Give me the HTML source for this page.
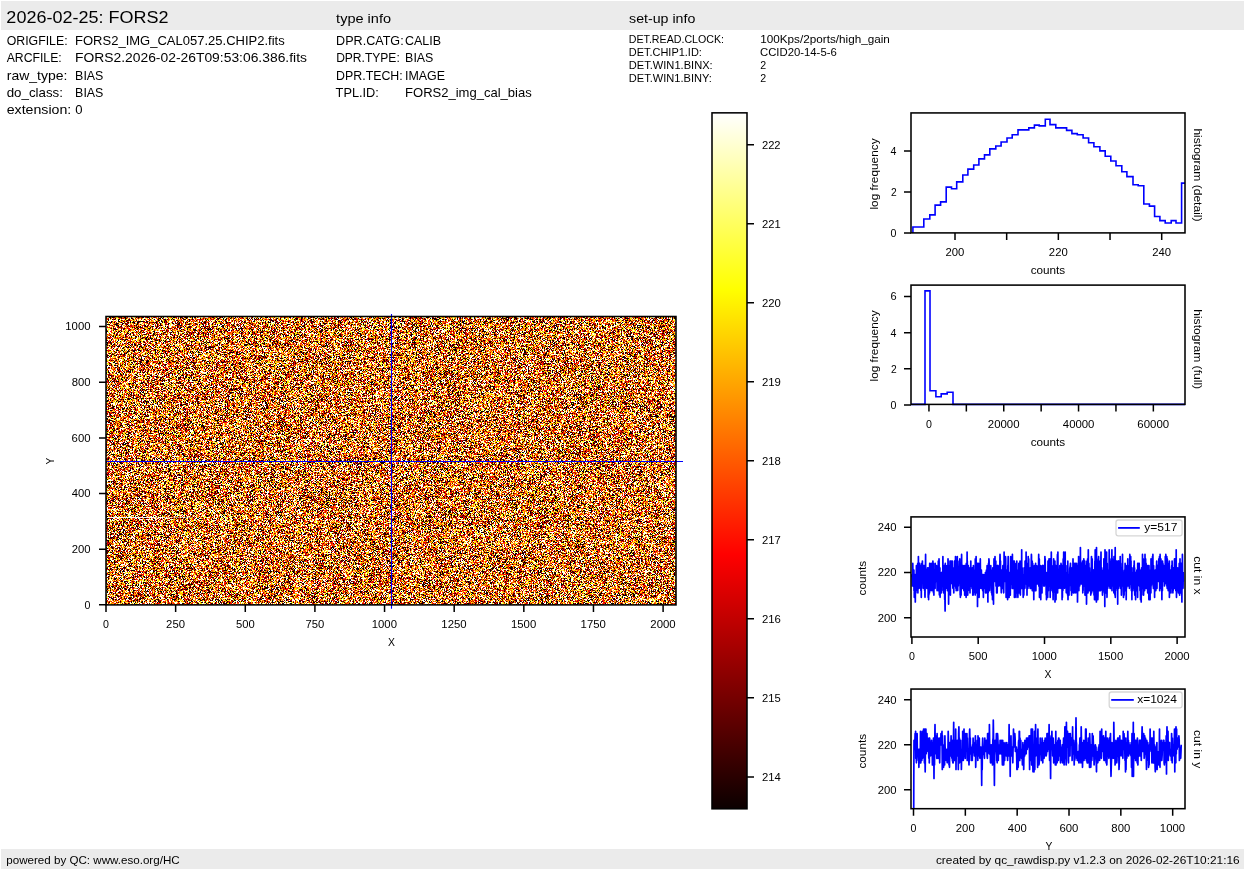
<!DOCTYPE html>
<html><head><meta charset="utf-8"><title>FORS2 raw display</title>
<style>
html,body{margin:0;padding:0;background:#fff;width:1245px;height:870px;overflow:hidden}
#noise{position:absolute;left:106px;top:316.5px;width:570px;height:288.4px;background:rgb(189,117,59)}
svg{position:absolute;left:0;top:0}
text{font-family:"Liberation Sans",sans-serif;fill:#000}
</style></head><body>
<canvas id="noise" width="570" height="288"></canvas>
<svg width="1245" height="870" viewBox="0 0 1245 870"><rect x="1" y="1" width="1243" height="29" fill="#ebebeb"/><rect x="1" y="849" width="1243" height="20" fill="#ebebeb"/><text x="6.39" y="23.00" font-size="16.64" textLength="162.21" lengthAdjust="spacingAndGlyphs" fill="#000" >2026-02-25: FORS2</text><text x="336.11" y="22.70" font-size="13.19" textLength="54.93" lengthAdjust="spacingAndGlyphs" fill="#000" >type info</text><text x="629.08" y="23.00" font-size="13.19" textLength="66.26" lengthAdjust="spacingAndGlyphs" fill="#000" >set-up info</text><text x="6.71" y="45.00" font-size="13.14" textLength="60.92" lengthAdjust="spacingAndGlyphs" fill="#000" >ORIGFILE:</text><text x="75.05" y="45.40" font-size="13.19" textLength="209.64" lengthAdjust="spacingAndGlyphs" fill="#000" >FORS2_IMG_CAL057.25.CHIP2.fits</text><text x="6.67" y="62.00" font-size="13.14" textLength="55.06" lengthAdjust="spacingAndGlyphs" fill="#000" >ARCFILE:</text><text x="74.98" y="62.00" font-size="13.19" textLength="231.96" lengthAdjust="spacingAndGlyphs" fill="#000" >FORS2.2026-02-26T09:53:06.386.fits</text><text x="6.80" y="79.60" font-size="13.14" textLength="60.55" lengthAdjust="spacingAndGlyphs" fill="#000" >raw_type:</text><text x="75.10" y="79.60" font-size="13.19" textLength="28.31" lengthAdjust="spacingAndGlyphs" fill="#000" >BIAS</text><text x="6.72" y="97.40" font-size="13.14" textLength="56.26" lengthAdjust="spacingAndGlyphs" fill="#000" >do_class:</text><text x="75.10" y="97.40" font-size="13.19" textLength="28.31" lengthAdjust="spacingAndGlyphs" fill="#000" >BIAS</text><text x="6.68" y="114.00" font-size="13.14" textLength="64.61" lengthAdjust="spacingAndGlyphs" fill="#000" >extension:</text><text x="75.21" y="114.00" font-size="13.19" textLength="7.30" lengthAdjust="spacingAndGlyphs" fill="#000" >0</text><text x="336.10" y="44.90" font-size="13.14" textLength="67.57" lengthAdjust="spacingAndGlyphs" fill="#000" >DPR.CATG:</text><text x="404.97" y="44.90" font-size="13.19" textLength="36.07" lengthAdjust="spacingAndGlyphs" fill="#000" >CALIB</text><text x="336.13" y="62.25" font-size="13.14" textLength="63.65" lengthAdjust="spacingAndGlyphs" fill="#000" >DPR.TYPE:</text><text x="405.10" y="62.25" font-size="13.19" textLength="28.31" lengthAdjust="spacingAndGlyphs" fill="#000" >BIAS</text><text x="336.10" y="79.60" font-size="13.14" textLength="66.63" lengthAdjust="spacingAndGlyphs" fill="#000" >DPR.TECH:</text><text x="404.97" y="79.60" font-size="13.19" textLength="40.11" lengthAdjust="spacingAndGlyphs" fill="#000" >IMAGE</text><text x="335.58" y="96.60" font-size="13.14" textLength="43.33" lengthAdjust="spacingAndGlyphs" fill="#000" >TPL.ID:</text><text x="405.05" y="96.60" font-size="13.19" textLength="126.72" lengthAdjust="spacingAndGlyphs" fill="#000" >FORS2_img_cal_bias</text><text x="628.76" y="43.00" font-size="11.07" textLength="95.33" lengthAdjust="spacingAndGlyphs" fill="#000" >DET.READ.CLOCK:</text><text x="760.26" y="43.00" font-size="11.07" textLength="129.62" lengthAdjust="spacingAndGlyphs" fill="#000" >100Kps/2ports/high_gain</text><text x="628.74" y="55.80" font-size="11.07" textLength="73.14" lengthAdjust="spacingAndGlyphs" fill="#000" >DET.CHIP1.ID:</text><text x="760.01" y="55.80" font-size="11.07" textLength="76.75" lengthAdjust="spacingAndGlyphs" fill="#000" >CCID20-14-5-6</text><text x="628.73" y="68.70" font-size="11.07" textLength="83.96" lengthAdjust="spacingAndGlyphs" fill="#000" >DET.WIN1.BINX:</text><text x="760.23" y="68.70" font-size="11.07" textLength="5.91" lengthAdjust="spacingAndGlyphs" fill="#000" >2</text><text x="628.74" y="82.00" font-size="11.07" textLength="83.16" lengthAdjust="spacingAndGlyphs" fill="#000" >DET.WIN1.BINY:</text><text x="760.23" y="82.00" font-size="11.07" textLength="5.91" lengthAdjust="spacingAndGlyphs" fill="#000" >2</text><text x="6.26" y="863.60" font-size="11.07" textLength="173.41" lengthAdjust="spacingAndGlyphs" fill="#000" >powered by QC: www.eso.org/HC</text><text x="935.93" y="863.80" font-size="11.07" textLength="303.69" lengthAdjust="spacingAndGlyphs" fill="#000" >created by qc_rawdisp.py v1.2.3 on 2026-02-26T10:21:16</text><path d="M107 517.5H155" stroke="#fff" stroke-width="1" stroke-opacity="0.95"/><path d="M155 517.5H192" stroke="#fff" stroke-width="1" stroke-opacity="0.45"/><path d="M391.5 314.1V608.8" stroke="#0000ff" stroke-width="1.1"/><path d="M106 461.45H683" stroke="#0000ff" stroke-width="1.1"/><rect x="106.0" y="316.5" width="570.0" height="288.4" fill="none" stroke="#000" stroke-width="1.55"/><path d="M106.00 604.90v7.0M175.64 604.90v7.0M245.28 604.90v7.0M314.91 604.90v7.0M384.55 604.90v7.0M454.19 604.90v7.0M523.83 604.90v7.0M593.46 604.90v7.0M663.10 604.90v7.0" stroke="#000" stroke-width="1.5"/><text x="103.04" y="627.90" font-size="10.70" textLength="5.92" lengthAdjust="spacingAndGlyphs" fill="#000" >0</text><text x="166.13" y="627.90" font-size="10.70" textLength="18.88" lengthAdjust="spacingAndGlyphs" fill="#000" >250</text><text x="235.91" y="627.90" font-size="10.70" textLength="18.72" lengthAdjust="spacingAndGlyphs" fill="#000" >500</text><text x="305.45" y="627.90" font-size="10.70" textLength="18.80" lengthAdjust="spacingAndGlyphs" fill="#000" >750</text><text x="371.72" y="627.90" font-size="10.70" textLength="25.23" lengthAdjust="spacingAndGlyphs" fill="#000" >1000</text><text x="441.36" y="627.90" font-size="10.70" textLength="25.23" lengthAdjust="spacingAndGlyphs" fill="#000" >1250</text><text x="511.00" y="627.90" font-size="10.70" textLength="25.23" lengthAdjust="spacingAndGlyphs" fill="#000" >1500</text><text x="580.64" y="627.90" font-size="10.70" textLength="25.23" lengthAdjust="spacingAndGlyphs" fill="#000" >1750</text><text x="650.38" y="627.90" font-size="10.70" textLength="25.31" lengthAdjust="spacingAndGlyphs" fill="#000" >2000</text><path d="M106.00 604.80h-7.0M106.00 549.16h-7.0M106.00 493.52h-7.0M106.00 437.88h-7.0M106.00 382.24h-7.0M106.00 326.60h-7.0" stroke="#000" stroke-width="1.5"/><text x="84.59" y="608.65" font-size="10.70" textLength="5.92" lengthAdjust="spacingAndGlyphs" fill="#000" >0</text><text x="71.66" y="553.01" font-size="10.70" textLength="18.88" lengthAdjust="spacingAndGlyphs" fill="#000" >200</text><text x="71.73" y="497.37" font-size="10.70" textLength="18.81" lengthAdjust="spacingAndGlyphs" fill="#000" >400</text><text x="71.62" y="441.73" font-size="10.70" textLength="18.92" lengthAdjust="spacingAndGlyphs" fill="#000" >600</text><text x="71.69" y="386.09" font-size="10.70" textLength="18.85" lengthAdjust="spacingAndGlyphs" fill="#000" >800</text><text x="65.31" y="330.45" font-size="10.70" textLength="25.23" lengthAdjust="spacingAndGlyphs" fill="#000" >1000</text><text x="388.02" y="645.90" font-size="11.02" textLength="6.94" lengthAdjust="spacingAndGlyphs" fill="#000" >X</text><g transform="translate(50.00,461.00) rotate(-90)"><text x="-3.42" y="3.70" font-size="11.02" textLength="6.84" lengthAdjust="spacingAndGlyphs">Y</text></g><defs><linearGradient id="hot" x1="0" y1="1" x2="0" y2="0"><stop offset="0" stop-color="rgb(11,0,0)"/><stop offset="0.365079" stop-color="rgb(255,0,0)"/><stop offset="0.746032" stop-color="rgb(255,255,0)"/><stop offset="1" stop-color="rgb(255,255,255)"/></linearGradient></defs><rect x="712.0" y="112.85" width="35.0" height="695.9499999999999" fill="url(#hot)"/><rect x="712.0" y="112.85" width="35.0" height="695.9499999999999" fill="none" stroke="#000" stroke-width="1.55"/><path d="M747.00 776.90h7.0M747.00 697.87h7.0M747.00 618.84h7.0M747.00 539.81h7.0M747.00 460.78h7.0M747.00 381.75h7.0M747.00 302.72h7.0M747.00 223.69h7.0M747.00 144.66h7.0" stroke="#000" stroke-width="1.5"/><text x="761.93" y="780.75" font-size="10.70" textLength="18.87" lengthAdjust="spacingAndGlyphs" fill="#000" >214</text><text x="761.94" y="701.72" font-size="10.70" textLength="18.69" lengthAdjust="spacingAndGlyphs" fill="#000" >215</text><text x="761.93" y="622.69" font-size="10.70" textLength="18.97" lengthAdjust="spacingAndGlyphs" fill="#000" >216</text><text x="761.93" y="543.66" font-size="10.70" textLength="18.81" lengthAdjust="spacingAndGlyphs" fill="#000" >217</text><text x="761.93" y="464.63" font-size="10.70" textLength="18.91" lengthAdjust="spacingAndGlyphs" fill="#000" >218</text><text x="761.93" y="385.60" font-size="10.70" textLength="18.94" lengthAdjust="spacingAndGlyphs" fill="#000" >219</text><text x="761.93" y="306.57" font-size="10.70" textLength="18.88" lengthAdjust="spacingAndGlyphs" fill="#000" >220</text><text x="761.94" y="227.54" font-size="10.70" textLength="18.72" lengthAdjust="spacingAndGlyphs" fill="#000" >221</text><text x="761.94" y="148.51" font-size="10.70" textLength="18.65" lengthAdjust="spacingAndGlyphs" fill="#000" >222</text><clipPath id="c1"><rect x="911.0" y="112.93" width="274.0" height="119.97"/></clipPath><path d="M912.9 232.9V227.0H923.8V219.0H929.8V214.9H935.1V205.1H940.6V201.9H946.2V187.1H951.5V188.7H956.7V181.9H962.8V175.0H967.9V169.1H973.7V165.0H978.9V158.9H984.5V154.9H989.8V148.9H995.8V146.0H1001.1V142.0H1007.0V138.0H1012.2V134.8H1018.0V129.9H1028.8V127.9H1034.4V125.1H1039.2V125.9H1045.3V119.2H1050.0V124.6H1055.8V127.9H1066.6V130.4H1071.9V133.6H1077.3V134.8H1083.1V138.0H1088.6V142.8H1093.9V146.8H1099.9V150.9H1105.2V156.2H1110.8V161.0H1116.0V165.8H1121.8V171.8H1126.9V176.6H1133.0V184.7H1138.2V185.8H1143.8V204.0H1149.4V206.1H1154.6V216.5H1159.9V220.6H1165.2V223.0H1171.2V220.6H1176.0V223.0H1181.6V183.1H1186" fill="none" stroke="#0000ff" stroke-width="1.6" clip-path="url(#c1)"/><rect x="911.0" y="112.93" width="274.0" height="119.97" fill="none" stroke="#000" stroke-width="1.55"/><path d="M955.00 232.90v7.0M1006.67 232.90v7.0M1058.35 232.90v7.0M1110.03 232.90v7.0M1161.70 232.90v7.0" stroke="#000" stroke-width="1.5"/><text x="945.50" y="256.10" font-size="10.70" textLength="18.88" lengthAdjust="spacingAndGlyphs" fill="#000" >200</text><text x="1048.85" y="256.10" font-size="10.70" textLength="18.88" lengthAdjust="spacingAndGlyphs" fill="#000" >220</text><text x="1152.20" y="256.10" font-size="10.70" textLength="18.88" lengthAdjust="spacingAndGlyphs" fill="#000" >240</text><path d="M911.00 232.90h-7.0M911.00 192.00h-7.0M911.00 151.10h-7.0" stroke="#000" stroke-width="1.5"/><text x="890.59" y="236.75" font-size="10.70" textLength="5.92" lengthAdjust="spacingAndGlyphs" fill="#000" >0</text><text x="890.91" y="195.85" font-size="10.70" textLength="5.71" lengthAdjust="spacingAndGlyphs" fill="#000" >2</text><text x="890.49" y="154.95" font-size="10.70" textLength="5.92" lengthAdjust="spacingAndGlyphs" fill="#000" >4</text><text x="1030.66" y="273.80" font-size="11.02" textLength="34.60" lengthAdjust="spacingAndGlyphs" fill="#000" >counts</text><g transform="translate(878.00,173.60) rotate(-90)"><text x="-35.93" y="0.00" font-size="11.02" textLength="71.08" lengthAdjust="spacingAndGlyphs">log frequency</text></g><g transform="translate(1194.30,175.00) rotate(90)"><text x="-46.60" y="0.00" font-size="11.02" textLength="93.12" lengthAdjust="spacingAndGlyphs">histogram (detail)</text></g><path d="M911 404.4H925V290.9H930V390.7H935.9V396.7H941.2V393.9H947.2V392.3H953V404.4H1185" fill="none" stroke="#0000ff" stroke-width="1.6"/><rect x="911.0" y="285.1" width="274.0" height="119.29999999999995" fill="none" stroke="#000" stroke-width="1.55"/><path d="M928.95 404.40v7.0M966.35 404.40v7.0M1003.75 404.40v7.0M1041.15 404.40v7.0M1078.55 404.40v7.0M1115.95 404.40v7.0M1153.35 404.40v7.0" stroke="#000" stroke-width="1.5"/><text x="925.99" y="428.30" font-size="10.70" textLength="5.92" lengthAdjust="spacingAndGlyphs" fill="#000" >0</text><text x="987.82" y="428.30" font-size="10.70" textLength="31.74" lengthAdjust="spacingAndGlyphs" fill="#000" >20000</text><text x="1062.81" y="428.30" font-size="10.70" textLength="31.67" lengthAdjust="spacingAndGlyphs" fill="#000" >40000</text><text x="1137.39" y="428.30" font-size="10.70" textLength="31.78" lengthAdjust="spacingAndGlyphs" fill="#000" >60000</text><path d="M911.00 404.90h-7.0M911.00 368.80h-7.0M911.00 332.70h-7.0M911.00 296.60h-7.0" stroke="#000" stroke-width="1.5"/><text x="890.59" y="408.75" font-size="10.70" textLength="5.92" lengthAdjust="spacingAndGlyphs" fill="#000" >0</text><text x="890.91" y="372.65" font-size="10.70" textLength="5.71" lengthAdjust="spacingAndGlyphs" fill="#000" >2</text><text x="890.49" y="336.55" font-size="10.70" textLength="5.92" lengthAdjust="spacingAndGlyphs" fill="#000" >4</text><text x="890.46" y="300.45" font-size="10.70" textLength="6.13" lengthAdjust="spacingAndGlyphs" fill="#000" >6</text><text x="1030.66" y="446.00" font-size="11.02" textLength="34.60" lengthAdjust="spacingAndGlyphs" fill="#000" >counts</text><g transform="translate(878.00,345.55) rotate(-90)"><text x="-35.93" y="0.00" font-size="11.02" textLength="71.08" lengthAdjust="spacingAndGlyphs">log frequency</text></g><g transform="translate(1194.30,349.20) rotate(90)"><text x="-40.01" y="0.00" font-size="11.02" textLength="79.92" lengthAdjust="spacingAndGlyphs">histogram (full)</text></g><clipPath id="c3"><rect x="911.0" y="516.9" width="274.0" height="120.10000000000002"/></clipPath><path d="M911.9 577.0 912.0 574.7 912.2 579.2 912.3 586.0 912.4 581.5 912.6 586.0 912.7 577.0 912.8 563.4 913.0 581.5 913.1 583.8 913.2 572.5 913.4 572.5 913.5 577.0 913.6 586.0 913.8 577.0 913.9 570.2 914.0 590.6 914.2 581.5 914.3 597.3 914.4 590.6 914.6 595.1 914.7 579.2 914.8 590.6 915.0 574.7 915.1 574.7 915.2 579.2 915.3 601.9 915.5 581.5 915.6 577.0 915.7 574.7 915.9 592.8 916.0 581.5 916.1 586.0 916.3 586.0 916.4 565.7 916.5 586.0 916.7 577.0 916.8 567.9 916.9 583.8 917.1 579.2 917.2 577.0 917.3 577.0 917.5 590.6 917.6 577.0 917.7 563.4 917.9 592.8 918.0 567.9 918.1 574.7 918.3 583.8 918.4 556.6 918.5 570.2 918.7 588.3 918.8 577.0 918.9 570.2 919.1 579.2 919.2 570.2 919.3 577.0 919.5 570.2 919.6 563.4 919.7 583.8 919.9 574.7 920.0 581.5 920.1 574.7 920.3 588.3 920.4 583.8 920.5 579.2 920.7 567.9 920.8 565.7 920.9 590.6 921.1 586.0 921.2 570.2 921.3 597.3 921.4 581.5 921.6 577.0 921.7 563.4 921.8 570.2 922.0 579.2 922.1 581.5 922.2 579.2 922.4 561.1 922.5 581.5 922.6 579.2 922.8 572.5 922.9 579.2 923.0 579.2 923.2 588.3 923.3 577.0 923.4 581.5 923.6 565.7 923.7 570.2 923.8 577.0 924.0 570.2 924.1 581.5 924.2 565.7 924.4 577.0 924.5 570.2 924.6 590.6 924.8 572.5 924.9 595.1 925.0 597.3 925.2 579.2 925.3 586.0 925.4 574.7 925.6 554.4 925.7 586.0 925.8 583.8 926.0 574.7 926.1 572.5 926.2 579.2 926.4 579.2 926.5 570.2 926.6 572.5 926.8 588.3 926.9 577.0 927.0 577.0 927.2 588.3 927.3 574.7 927.4 586.0 927.5 567.9 927.7 574.7 927.8 577.0 927.9 583.8 928.1 579.2 928.2 597.3 928.3 588.3 928.5 572.5 928.6 599.6 928.7 567.9 928.9 595.1 929.0 570.2 929.1 586.0 929.3 567.9 929.4 574.7 929.5 592.8 929.7 563.4 929.8 563.4 929.9 577.0 930.1 579.2 930.2 579.2 930.3 586.0 930.5 565.7 930.6 581.5 930.7 577.0 930.9 586.0 931.0 583.8 931.1 590.6 931.3 563.4 931.4 579.2 931.5 567.9 931.7 577.0 931.8 583.8 931.9 579.2 932.1 583.8 932.2 577.0 932.3 581.5 932.5 579.2 932.6 590.6 932.7 586.0 932.9 561.1 933.0 583.8 933.1 588.3 933.3 572.5 933.4 563.4 933.5 592.8 933.6 579.2 933.8 583.8 933.9 595.1 934.0 570.2 934.2 577.0 934.3 577.0 934.4 583.8 934.6 572.5 934.7 581.5 934.8 579.2 935.0 588.3 935.1 588.3 935.2 563.4 935.4 581.5 935.5 574.7 935.6 577.0 935.8 581.5 935.9 581.5 936.0 570.2 936.2 579.2 936.3 579.2 936.4 577.0 936.6 565.7 936.7 570.2 936.8 572.5 937.0 583.8 937.1 590.6 937.2 567.9 937.4 567.9 937.5 579.2 937.6 572.5 937.8 567.9 937.9 567.9 938.0 567.9 938.2 581.5 938.3 561.1 938.4 590.6 938.6 567.9 938.7 572.5 938.8 567.9 939.0 558.9 939.1 561.1 939.2 588.3 939.4 595.1 939.5 567.9 939.6 588.3 939.7 577.0 939.9 567.9 940.0 592.8 940.1 597.3 940.3 574.7 940.4 577.0 940.5 579.2 940.7 577.0 940.8 586.0 940.9 592.8 941.1 579.2 941.2 586.0 941.3 592.8 941.5 572.5 941.6 577.0 941.7 572.5 941.9 586.0 942.0 583.8 942.1 586.0 942.3 586.0 942.4 574.7 942.5 586.0 942.7 572.5 942.8 572.5 942.9 556.6 943.1 590.6 943.2 567.9 943.3 577.0 943.5 577.0 943.6 592.8 943.7 581.5 943.9 570.2 944.0 577.0 944.1 577.0 944.3 579.2 944.4 565.7 944.5 577.0 944.7 599.6 944.8 583.8 944.9 597.3 945.1 610.9 945.2 581.5 945.3 563.4 945.5 577.0 945.6 588.3 945.7 586.0 945.8 565.7 946.0 574.7 946.1 577.0 946.2 577.0 946.4 577.0 946.5 567.9 946.6 572.5 946.8 574.7 946.9 588.3 947.0 572.5 947.2 583.8 947.3 565.7 947.4 590.6 947.6 579.2 947.7 577.0 947.8 590.6 948.0 558.9 948.1 561.1 948.2 581.5 948.4 570.2 948.5 572.5 948.6 604.1 948.8 574.7 948.9 577.0 949.0 577.0 949.2 588.3 949.3 579.2 949.4 579.2 949.6 565.7 949.7 572.5 949.8 577.0 950.0 561.1 950.1 581.5 950.2 581.5 950.4 595.1 950.5 561.1 950.6 567.9 950.8 567.9 950.9 570.2 951.0 577.0 951.2 574.7 951.3 579.2 951.4 579.2 951.6 577.0 951.7 561.1 951.8 570.2 951.9 577.0 952.1 583.8 952.2 583.8 952.3 561.1 952.5 572.5 952.6 577.0 952.7 581.5 952.9 588.3 953.0 577.0 953.1 567.9 953.3 581.5 953.4 579.2 953.5 579.2 953.7 577.0 953.8 592.8 953.9 579.2 954.1 586.0 954.2 567.9 954.3 583.8 954.5 570.2 954.6 561.1 954.7 579.2 954.9 583.8 955.0 574.7 955.1 577.0 955.3 586.0 955.4 572.5 955.5 556.6 955.7 579.2 955.8 579.2 955.9 588.3 956.1 574.7 956.2 590.6 956.3 588.3 956.5 563.4 956.6 586.0 956.7 565.7 956.9 561.1 957.0 574.7 957.1 572.5 957.3 556.6 957.4 579.2 957.5 583.8 957.7 590.6 957.8 577.0 957.9 561.1 958.0 567.9 958.2 586.0 958.3 586.0 958.4 581.5 958.6 574.7 958.7 579.2 958.8 574.7 959.0 574.7 959.1 579.2 959.2 577.0 959.4 574.7 959.5 577.0 959.6 572.5 959.8 558.9 959.9 570.2 960.0 577.0 960.2 595.1 960.3 572.5 960.4 597.3 960.6 590.6 960.7 567.9 960.8 570.2 961.0 579.2 961.1 595.1 961.2 581.5 961.4 583.8 961.5 570.2 961.6 554.4 961.8 574.7 961.9 586.0 962.0 588.3 962.2 577.0 962.3 579.2 962.4 588.3 962.6 574.7 962.7 588.3 962.8 565.7 963.0 565.7 963.1 565.7 963.2 581.5 963.4 572.5 963.5 579.2 963.6 581.5 963.8 581.5 963.9 590.6 964.0 590.6 964.1 567.9 964.3 579.2 964.4 574.7 964.5 565.7 964.7 595.1 964.8 586.0 964.9 574.7 965.1 572.5 965.2 581.5 965.3 565.7 965.5 574.7 965.6 588.3 965.7 586.0 965.9 567.9 966.0 572.5 966.1 597.3 966.3 563.4 966.4 570.2 966.5 563.4 966.7 581.5 966.8 579.2 966.9 588.3 967.1 552.1 967.2 579.2 967.3 561.1 967.5 583.8 967.6 574.7 967.7 595.1 967.9 581.5 968.0 567.9 968.1 590.6 968.3 565.7 968.4 572.5 968.5 588.3 968.7 581.5 968.8 581.5 968.9 577.0 969.1 581.5 969.2 586.0 969.3 579.2 969.5 588.3 969.6 590.6 969.7 577.0 969.9 567.9 970.0 592.8 970.1 577.0 970.2 583.8 970.4 586.0 970.5 567.9 970.6 581.5 970.8 561.1 970.9 586.0 971.0 572.5 971.2 579.2 971.3 583.8 971.4 570.2 971.6 579.2 971.7 570.2 971.8 577.0 972.0 588.3 972.1 577.0 972.2 577.0 972.4 567.9 972.5 586.0 972.6 577.0 972.8 595.1 972.9 570.2 973.0 588.3 973.2 595.1 973.3 577.0 973.4 565.7 973.6 592.8 973.7 588.3 973.8 583.8 974.0 588.3 974.1 572.5 974.2 586.0 974.4 583.8 974.5 570.2 974.6 583.8 974.8 572.5 974.9 586.0 975.0 588.3 975.2 595.1 975.3 558.9 975.4 579.2 975.6 574.7 975.7 577.0 975.8 574.7 976.0 577.0 976.1 556.6 976.2 588.3 976.3 592.8 976.5 588.3 976.6 590.6 976.7 570.2 976.9 567.9 977.0 586.0 977.1 590.6 977.3 581.5 977.4 563.4 977.5 606.4 977.7 572.5 977.8 588.3 977.9 565.7 978.1 588.3 978.2 579.2 978.3 592.8 978.5 586.0 978.6 563.4 978.7 567.9 978.9 581.5 979.0 586.0 979.1 597.3 979.3 581.5 979.4 577.0 979.5 577.0 979.7 577.0 979.8 588.3 979.9 577.0 980.1 577.0 980.2 563.4 980.3 558.9 980.5 579.2 980.6 583.8 980.7 577.0 980.9 583.8 981.0 583.8 981.1 577.0 981.3 588.3 981.4 570.2 981.5 577.0 981.7 574.7 981.8 579.2 981.9 583.8 982.1 586.0 982.2 579.2 982.3 581.5 982.4 574.7 982.6 577.0 982.7 590.6 982.8 577.0 983.0 590.6 983.1 583.8 983.2 579.2 983.4 597.3 983.5 577.0 983.6 574.7 983.8 579.2 983.9 581.5 984.0 581.5 984.2 586.0 984.3 579.2 984.4 581.5 984.6 577.0 984.7 588.3 984.8 574.7 985.0 574.7 985.1 579.2 985.2 581.5 985.4 572.5 985.5 592.8 985.6 572.5 985.8 574.7 985.9 574.7 986.0 572.5 986.2 583.8 986.3 579.2 986.4 570.2 986.6 572.5 986.7 574.7 986.8 592.8 987.0 572.5 987.1 565.7 987.2 565.7 987.4 574.7 987.5 592.8 987.6 567.9 987.8 579.2 987.9 601.9 988.0 572.5 988.2 592.8 988.3 590.6 988.4 583.8 988.5 563.4 988.7 581.5 988.8 574.7 988.9 558.9 989.1 561.1 989.2 577.0 989.3 579.2 989.5 590.6 989.6 583.8 989.7 572.5 989.9 572.5 990.0 577.0 990.1 567.9 990.3 583.8 990.4 577.0 990.5 570.2 990.7 570.2 990.8 565.7 990.9 572.5 991.1 579.2 991.2 572.5 991.3 588.3 991.5 592.8 991.6 570.2 991.7 577.0 991.9 574.7 992.0 595.1 992.1 581.5 992.3 583.8 992.4 586.0 992.5 599.6 992.7 581.5 992.8 567.9 992.9 572.5 993.1 583.8 993.2 577.0 993.3 570.2 993.5 604.1 993.6 579.2 993.7 572.5 993.9 570.2 994.0 558.9 994.1 565.7 994.3 574.7 994.4 574.7 994.5 567.9 994.6 581.5 994.8 577.0 994.9 567.9 995.0 556.6 995.2 579.2 995.3 577.0 995.4 574.7 995.6 563.4 995.7 577.0 995.8 561.1 996.0 586.0 996.1 579.2 996.2 579.2 996.4 567.9 996.5 565.7 996.6 592.8 996.8 586.0 996.9 572.5 997.0 583.8 997.2 592.8 997.3 565.7 997.4 572.5 997.6 572.5 997.7 581.5 997.8 565.7 998.0 579.2 998.1 565.7 998.2 586.0 998.4 586.0 998.5 574.7 998.6 583.8 998.8 570.2 998.9 574.7 999.0 586.0 999.2 577.0 999.3 581.5 999.4 567.9 999.6 583.8 999.7 581.5 999.8 565.7 1000.0 554.4 1000.1 556.6 1000.2 577.0 1000.4 574.7 1000.5 561.1 1000.6 579.2 1000.7 586.0 1000.9 574.7 1001.0 572.5 1001.1 586.0 1001.3 592.8 1001.4 590.6 1001.5 570.2 1001.7 583.8 1001.8 579.2 1001.9 574.7 1002.1 570.2 1002.2 581.5 1002.3 572.5 1002.5 586.0 1002.6 581.5 1002.7 588.3 1002.9 565.7 1003.0 577.0 1003.1 583.8 1003.3 581.5 1003.4 579.2 1003.5 570.2 1003.7 592.8 1003.8 588.3 1003.9 581.5 1004.1 552.1 1004.2 567.9 1004.3 579.2 1004.5 570.2 1004.6 556.6 1004.7 579.2 1004.9 581.5 1005.0 565.7 1005.1 572.5 1005.3 570.2 1005.4 581.5 1005.5 556.6 1005.7 558.9 1005.8 570.2 1005.9 570.2 1006.1 597.3 1006.2 570.2 1006.3 579.2 1006.5 572.5 1006.6 570.2 1006.7 581.5 1006.8 595.1 1007.0 572.5 1007.1 583.8 1007.2 579.2 1007.4 583.8 1007.5 581.5 1007.6 599.6 1007.8 565.7 1007.9 574.7 1008.0 565.7 1008.2 556.6 1008.3 577.0 1008.4 595.1 1008.6 586.0 1008.7 588.3 1008.8 581.5 1009.0 577.0 1009.1 597.3 1009.2 572.5 1009.4 592.8 1009.5 574.7 1009.6 577.0 1009.8 579.2 1009.9 577.0 1010.0 581.5 1010.2 583.8 1010.3 595.1 1010.4 577.0 1010.6 558.9 1010.7 556.6 1010.8 563.4 1011.0 570.2 1011.1 583.8 1011.2 563.4 1011.4 577.0 1011.5 577.0 1011.6 579.2 1011.8 577.0 1011.9 581.5 1012.0 577.0 1012.2 588.3 1012.3 581.5 1012.4 554.4 1012.6 577.0 1012.7 579.2 1012.8 572.5 1012.9 570.2 1013.1 588.3 1013.2 579.2 1013.3 567.9 1013.5 574.7 1013.6 574.7 1013.7 561.1 1013.9 583.8 1014.0 577.0 1014.1 581.5 1014.3 561.1 1014.4 597.3 1014.5 583.8 1014.7 581.5 1014.8 570.2 1014.9 570.2 1015.1 563.4 1015.2 592.8 1015.3 570.2 1015.5 579.2 1015.6 583.8 1015.7 572.5 1015.9 586.0 1016.0 597.3 1016.1 581.5 1016.3 592.8 1016.4 583.8 1016.5 572.5 1016.7 574.7 1016.8 561.1 1016.9 579.2 1017.1 592.8 1017.2 583.8 1017.3 586.0 1017.5 588.3 1017.6 572.5 1017.7 583.8 1017.9 597.3 1018.0 570.2 1018.1 579.2 1018.3 572.5 1018.4 577.0 1018.5 570.2 1018.7 577.0 1018.8 563.4 1018.9 572.5 1019.0 572.5 1019.2 572.5 1019.3 592.8 1019.4 579.2 1019.6 579.2 1019.7 574.7 1019.8 590.6 1020.0 561.1 1020.1 577.0 1020.2 588.3 1020.4 595.1 1020.5 579.2 1020.6 577.0 1020.8 583.8 1020.9 577.0 1021.0 583.8 1021.2 572.5 1021.3 583.8 1021.4 577.0 1021.6 567.9 1021.7 549.8 1021.8 588.3 1022.0 581.5 1022.1 586.0 1022.2 567.9 1022.4 588.3 1022.5 581.5 1022.6 577.0 1022.8 586.0 1022.9 586.0 1023.0 581.5 1023.2 597.3 1023.3 592.8 1023.4 581.5 1023.6 574.7 1023.7 579.2 1023.8 595.1 1024.0 581.5 1024.1 567.9 1024.2 570.2 1024.4 577.0 1024.5 586.0 1024.6 570.2 1024.8 583.8 1024.9 588.3 1025.0 586.0 1025.1 561.1 1025.3 574.7 1025.4 565.7 1025.5 581.5 1025.7 567.9 1025.8 583.8 1025.9 579.2 1026.1 552.1 1026.2 570.2 1026.3 581.5 1026.5 577.0 1026.6 574.7 1026.7 565.7 1026.9 581.5 1027.0 595.1 1027.1 579.2 1027.3 577.0 1027.4 577.0 1027.5 563.4 1027.7 574.7 1027.8 567.9 1027.9 588.3 1028.1 567.9 1028.2 556.6 1028.3 570.2 1028.5 574.7 1028.6 574.7 1028.7 558.9 1028.9 586.0 1029.0 577.0 1029.1 572.5 1029.3 570.2 1029.4 581.5 1029.5 574.7 1029.7 579.2 1029.8 574.7 1029.9 579.2 1030.1 588.3 1030.2 577.0 1030.3 567.9 1030.5 586.0 1030.6 579.2 1030.7 570.2 1030.9 588.3 1031.0 574.7 1031.1 588.3 1031.2 565.7 1031.4 554.4 1031.5 556.6 1031.6 579.2 1031.8 570.2 1031.9 574.7 1032.0 577.0 1032.2 561.1 1032.3 590.6 1032.4 565.7 1032.6 577.0 1032.7 563.4 1032.8 574.7 1033.0 583.8 1033.1 574.7 1033.2 570.2 1033.4 577.0 1033.5 572.5 1033.6 581.5 1033.8 599.6 1033.9 567.9 1034.0 570.2 1034.2 574.7 1034.3 577.0 1034.4 565.7 1034.6 581.5 1034.7 583.8 1034.8 579.2 1035.0 565.7 1035.1 590.6 1035.2 565.7 1035.4 583.8 1035.5 588.3 1035.6 563.4 1035.8 577.0 1035.9 590.6 1036.0 581.5 1036.2 567.9 1036.3 565.7 1036.4 581.5 1036.6 572.5 1036.7 570.2 1036.8 583.8 1037.0 572.5 1037.1 577.0 1037.2 581.5 1037.3 581.5 1037.5 577.0 1037.6 577.0 1037.7 583.8 1037.9 581.5 1038.0 565.7 1038.1 574.7 1038.3 567.9 1038.4 565.7 1038.5 570.2 1038.7 554.4 1038.8 586.0 1038.9 567.9 1039.1 579.2 1039.2 558.9 1039.3 558.9 1039.5 597.3 1039.6 586.0 1039.7 570.2 1039.9 567.9 1040.0 570.2 1040.1 577.0 1040.3 572.5 1040.4 570.2 1040.5 577.0 1040.7 565.7 1040.8 599.6 1040.9 570.2 1041.1 588.3 1041.2 567.9 1041.3 579.2 1041.5 586.0 1041.6 572.5 1041.7 586.0 1041.9 586.0 1042.0 592.8 1042.1 577.0 1042.3 572.5 1042.4 565.7 1042.5 579.2 1042.7 565.7 1042.8 577.0 1042.9 577.0 1043.1 570.2 1043.2 565.7 1043.3 581.5 1043.4 579.2 1043.6 579.2 1043.7 577.0 1043.8 586.0 1044.0 565.7 1044.1 581.5 1044.2 572.5 1044.4 586.0 1044.5 572.5 1044.6 572.5 1044.8 581.5 1044.9 556.6 1045.0 572.5 1045.2 558.9 1045.3 567.9 1045.4 583.8 1045.6 581.5 1045.7 572.5 1045.8 577.0 1046.0 577.0 1046.1 579.2 1046.2 595.1 1046.4 579.2 1046.5 599.6 1046.6 572.5 1046.8 583.8 1046.9 583.8 1047.0 579.2 1047.2 574.7 1047.3 590.6 1047.4 595.1 1047.6 588.3 1047.7 597.3 1047.8 586.0 1048.0 561.1 1048.1 588.3 1048.2 570.2 1048.4 590.6 1048.5 574.7 1048.6 579.2 1048.8 577.0 1048.9 570.2 1049.0 558.9 1049.2 574.7 1049.3 574.7 1049.4 586.0 1049.5 570.2 1049.7 579.2 1049.8 567.9 1049.9 577.0 1050.1 558.9 1050.2 597.3 1050.3 579.2 1050.5 567.9 1050.6 581.5 1050.7 586.0 1050.9 579.2 1051.0 590.6 1051.1 574.7 1051.3 552.1 1051.4 565.7 1051.5 588.3 1051.7 586.0 1051.8 581.5 1051.9 565.7 1052.1 586.0 1052.2 583.8 1052.3 567.9 1052.5 567.9 1052.6 581.5 1052.7 588.3 1052.9 592.8 1053.0 583.8 1053.1 599.6 1053.3 570.2 1053.4 583.8 1053.5 572.5 1053.7 558.9 1053.8 565.7 1053.9 588.3 1054.1 567.9 1054.2 565.7 1054.3 583.8 1054.5 586.0 1054.6 577.0 1054.7 592.8 1054.9 561.1 1055.0 601.9 1055.1 588.3 1055.3 579.2 1055.4 579.2 1055.5 574.7 1055.6 574.7 1055.8 579.2 1055.9 565.7 1056.0 599.6 1056.2 577.0 1056.3 583.8 1056.4 574.7 1056.6 574.7 1056.7 586.0 1056.8 583.8 1057.0 567.9 1057.1 572.5 1057.2 583.8 1057.4 556.6 1057.5 554.4 1057.6 592.8 1057.8 574.7 1057.9 552.1 1058.0 567.9 1058.2 574.7 1058.3 579.2 1058.4 581.5 1058.6 579.2 1058.7 581.5 1058.8 570.2 1059.0 581.5 1059.1 581.5 1059.2 588.3 1059.4 577.0 1059.5 586.0 1059.6 579.2 1059.8 565.7 1059.9 572.5 1060.0 572.5 1060.2 572.5 1060.3 577.0 1060.4 579.2 1060.6 579.2 1060.7 570.2 1060.8 588.3 1061.0 563.4 1061.1 577.0 1061.2 583.8 1061.4 581.5 1061.5 583.8 1061.6 574.7 1061.7 583.8 1061.9 565.7 1062.0 586.0 1062.1 599.6 1062.3 583.8 1062.4 597.3 1062.5 577.0 1062.7 565.7 1062.8 570.2 1062.9 590.6 1063.1 583.8 1063.2 558.9 1063.3 574.7 1063.5 577.0 1063.6 565.7 1063.7 552.1 1063.9 563.4 1064.0 574.7 1064.1 572.5 1064.3 570.2 1064.4 583.8 1064.5 588.3 1064.7 577.0 1064.8 586.0 1064.9 577.0 1065.1 577.0 1065.2 552.1 1065.3 586.0 1065.5 579.2 1065.6 579.2 1065.7 572.5 1065.9 565.7 1066.0 581.5 1066.1 586.0 1066.3 592.8 1066.4 586.0 1066.5 572.5 1066.7 577.0 1066.8 588.3 1066.9 581.5 1067.1 577.0 1067.2 572.5 1067.3 583.8 1067.5 579.2 1067.6 595.1 1067.7 588.3 1067.8 561.1 1068.0 599.6 1068.1 581.5 1068.2 574.7 1068.4 581.5 1068.5 586.0 1068.6 577.0 1068.8 577.0 1068.9 577.0 1069.0 595.1 1069.2 579.2 1069.3 586.0 1069.4 581.5 1069.6 574.7 1069.7 570.2 1069.8 567.9 1070.0 581.5 1070.1 567.9 1070.2 565.7 1070.4 565.7 1070.5 563.4 1070.6 579.2 1070.8 579.2 1070.9 567.9 1071.0 590.6 1071.2 574.7 1071.3 581.5 1071.4 581.5 1071.6 595.1 1071.7 586.0 1071.8 577.0 1072.0 567.9 1072.1 567.9 1072.2 577.0 1072.4 579.2 1072.5 586.0 1072.6 572.5 1072.8 579.2 1072.9 570.2 1073.0 558.9 1073.2 577.0 1073.3 592.8 1073.4 586.0 1073.6 592.8 1073.7 588.3 1073.8 563.4 1073.9 574.7 1074.1 592.8 1074.2 570.2 1074.3 563.4 1074.5 581.5 1074.6 583.8 1074.7 581.5 1074.9 574.7 1075.0 570.2 1075.1 565.7 1075.3 565.7 1075.4 565.7 1075.5 563.4 1075.7 570.2 1075.8 592.8 1075.9 579.2 1076.1 574.7 1076.2 581.5 1076.3 567.9 1076.5 581.5 1076.6 586.0 1076.7 563.4 1076.9 570.2 1077.0 574.7 1077.1 567.9 1077.3 565.7 1077.4 572.5 1077.5 601.9 1077.7 583.8 1077.8 581.5 1077.9 586.0 1078.1 574.7 1078.2 565.7 1078.3 581.5 1078.5 588.3 1078.6 556.6 1078.7 581.5 1078.9 590.6 1079.0 574.7 1079.1 572.5 1079.3 583.8 1079.4 567.9 1079.5 581.5 1079.7 586.0 1079.8 574.7 1079.9 570.2 1080.0 583.8 1080.2 574.7 1080.3 577.0 1080.4 547.6 1080.6 583.8 1080.7 563.4 1080.8 577.0 1081.0 579.2 1081.1 570.2 1081.2 567.9 1081.4 563.4 1081.5 574.7 1081.6 583.8 1081.8 581.5 1081.9 572.5 1082.0 570.2 1082.2 563.4 1082.3 572.5 1082.4 565.7 1082.6 561.1 1082.7 574.7 1082.8 592.8 1083.0 588.3 1083.1 590.6 1083.2 561.1 1083.4 586.0 1083.5 563.4 1083.6 570.2 1083.8 558.9 1083.9 565.7 1084.0 577.0 1084.2 579.2 1084.3 577.0 1084.4 574.7 1084.6 581.5 1084.7 577.0 1084.8 561.1 1085.0 595.1 1085.1 574.7 1085.2 586.0 1085.4 574.7 1085.5 567.9 1085.6 577.0 1085.8 570.2 1085.9 592.8 1086.0 565.7 1086.1 583.8 1086.3 570.2 1086.4 574.7 1086.5 604.1 1086.7 583.8 1086.8 574.7 1086.9 561.1 1087.1 574.7 1087.2 574.7 1087.3 590.6 1087.5 563.4 1087.6 558.9 1087.7 577.0 1087.9 579.2 1088.0 592.8 1088.1 567.9 1088.3 549.8 1088.4 570.2 1088.5 563.4 1088.7 572.5 1088.8 586.0 1088.9 563.4 1089.1 590.6 1089.2 579.2 1089.3 574.7 1089.5 567.9 1089.6 572.5 1089.7 572.5 1089.9 583.8 1090.0 590.6 1090.1 577.0 1090.3 583.8 1090.4 590.6 1090.5 590.6 1090.7 581.5 1090.8 595.1 1090.9 590.6 1091.1 592.8 1091.2 574.7 1091.3 572.5 1091.5 556.6 1091.6 592.8 1091.7 583.8 1091.9 567.9 1092.0 579.2 1092.1 579.2 1092.2 558.9 1092.4 581.5 1092.5 588.3 1092.6 590.6 1092.8 572.5 1092.9 574.7 1093.0 590.6 1093.2 586.0 1093.3 572.5 1093.4 570.2 1093.6 583.8 1093.7 570.2 1093.8 570.2 1094.0 595.1 1094.1 579.2 1094.2 572.5 1094.4 583.8 1094.5 599.6 1094.6 579.2 1094.8 570.2 1094.9 561.1 1095.0 599.6 1095.2 549.8 1095.3 588.3 1095.4 567.9 1095.6 563.4 1095.7 567.9 1095.8 574.7 1096.0 588.3 1096.1 570.2 1096.2 583.8 1096.4 601.9 1096.5 547.6 1096.6 570.2 1096.8 558.9 1096.9 586.0 1097.0 561.1 1097.2 561.1 1097.3 561.1 1097.4 577.0 1097.6 588.3 1097.7 579.2 1097.8 599.6 1098.0 595.1 1098.1 577.0 1098.2 586.0 1098.3 579.2 1098.5 577.0 1098.6 556.6 1098.7 563.4 1098.9 577.0 1099.0 565.7 1099.1 586.0 1099.3 581.5 1099.4 567.9 1099.5 590.6 1099.7 579.2 1099.8 590.6 1099.9 574.7 1100.1 561.1 1100.2 583.8 1100.3 574.7 1100.5 586.0 1100.6 588.3 1100.7 590.6 1100.9 561.1 1101.0 552.1 1101.1 572.5 1101.3 583.8 1101.4 570.2 1101.5 581.5 1101.7 567.9 1101.8 574.7 1101.9 574.7 1102.1 570.2 1102.2 583.8 1102.3 581.5 1102.5 595.1 1102.6 581.5 1102.7 590.6 1102.9 579.2 1103.0 586.0 1103.1 577.0 1103.3 572.5 1103.4 590.6 1103.5 586.0 1103.7 586.0 1103.8 570.2 1103.9 558.9 1104.1 567.9 1104.2 581.5 1104.3 561.1 1104.4 592.8 1104.6 561.1 1104.7 583.8 1104.8 606.4 1105.0 549.8 1105.1 561.1 1105.2 588.3 1105.4 574.7 1105.5 579.2 1105.6 577.0 1105.8 592.8 1105.9 583.8 1106.0 572.5 1106.2 574.7 1106.3 565.7 1106.4 577.0 1106.6 552.1 1106.7 583.8 1106.8 574.7 1107.0 597.3 1107.1 590.6 1107.2 563.4 1107.4 586.0 1107.5 572.5 1107.6 577.0 1107.8 588.3 1107.9 581.5 1108.0 581.5 1108.2 581.5 1108.3 570.2 1108.4 570.2 1108.6 583.8 1108.7 586.0 1108.8 574.7 1109.0 577.0 1109.1 565.7 1109.2 549.8 1109.4 567.9 1109.5 577.0 1109.6 579.2 1109.8 586.0 1109.9 586.0 1110.0 588.3 1110.2 581.5 1110.3 581.5 1110.4 570.2 1110.5 581.5 1110.7 579.2 1110.8 588.3 1110.9 561.1 1111.1 572.5 1111.2 558.9 1111.3 567.9 1111.5 561.1 1111.6 579.2 1111.7 570.2 1111.9 549.8 1112.0 590.6 1112.1 565.7 1112.3 558.9 1112.4 572.5 1112.5 570.2 1112.7 563.4 1112.8 583.8 1112.9 572.5 1113.1 586.0 1113.2 583.8 1113.3 583.8 1113.5 579.2 1113.6 574.7 1113.7 572.5 1113.9 592.8 1114.0 556.6 1114.1 565.7 1114.3 570.2 1114.4 581.5 1114.5 577.0 1114.7 570.2 1114.8 572.5 1114.9 595.1 1115.1 570.2 1115.2 547.6 1115.3 597.3 1115.5 565.7 1115.6 572.5 1115.7 579.2 1115.9 563.4 1116.0 588.3 1116.1 574.7 1116.3 561.1 1116.4 579.2 1116.5 581.5 1116.6 574.7 1116.8 581.5 1116.9 561.1 1117.0 586.0 1117.2 567.9 1117.3 590.6 1117.4 570.2 1117.6 577.0 1117.7 604.1 1117.8 577.0 1118.0 588.3 1118.1 581.5 1118.2 561.1 1118.4 588.3 1118.5 588.3 1118.6 561.1 1118.8 574.7 1118.9 561.1 1119.0 574.7 1119.2 586.0 1119.3 577.0 1119.4 563.4 1119.6 567.9 1119.7 577.0 1119.8 577.0 1120.0 579.2 1120.1 583.8 1120.2 556.6 1120.4 577.0 1120.5 588.3 1120.6 581.5 1120.8 570.2 1120.9 570.2 1121.0 579.2 1121.2 583.8 1121.3 577.0 1121.4 595.1 1121.6 590.6 1121.7 567.9 1121.8 581.5 1122.0 572.5 1122.1 563.4 1122.2 570.2 1122.4 577.0 1122.5 554.4 1122.6 570.2 1122.7 581.5 1122.9 570.2 1123.0 572.5 1123.1 586.0 1123.3 577.0 1123.4 579.2 1123.5 597.3 1123.7 579.2 1123.8 579.2 1123.9 581.5 1124.1 595.1 1124.2 581.5 1124.3 577.0 1124.5 577.0 1124.6 588.3 1124.7 570.2 1124.9 590.6 1125.0 579.2 1125.1 563.4 1125.3 583.8 1125.4 581.5 1125.5 565.7 1125.7 581.5 1125.8 579.2 1125.9 574.7 1126.1 565.7 1126.2 599.6 1126.3 586.0 1126.5 588.3 1126.6 588.3 1126.7 586.0 1126.9 586.0 1127.0 574.7 1127.1 586.0 1127.3 574.7 1127.4 572.5 1127.5 583.8 1127.7 574.7 1127.8 558.9 1127.9 574.7 1128.1 583.8 1128.2 577.0 1128.3 586.0 1128.5 574.7 1128.6 567.9 1128.7 586.0 1128.8 579.2 1129.0 565.7 1129.1 581.5 1129.2 574.7 1129.4 588.3 1129.5 586.0 1129.6 581.5 1129.8 554.4 1129.9 581.5 1130.0 581.5 1130.2 583.8 1130.3 579.2 1130.4 570.2 1130.6 574.7 1130.7 556.6 1130.8 574.7 1131.0 561.1 1131.1 574.7 1131.2 570.2 1131.4 590.6 1131.5 579.2 1131.6 577.0 1131.8 579.2 1131.9 599.6 1132.0 567.9 1132.2 581.5 1132.3 581.5 1132.4 579.2 1132.6 579.2 1132.7 572.5 1132.8 590.6 1133.0 586.0 1133.1 574.7 1133.2 574.7 1133.4 581.5 1133.5 583.8 1133.6 586.0 1133.8 577.0 1133.9 565.7 1134.0 588.3 1134.2 561.1 1134.3 567.9 1134.4 581.5 1134.6 567.9 1134.7 592.8 1134.8 595.1 1135.0 590.6 1135.1 581.5 1135.2 579.2 1135.3 581.5 1135.5 577.0 1135.6 599.6 1135.7 572.5 1135.9 590.6 1136.0 583.8 1136.1 581.5 1136.3 588.3 1136.4 590.6 1136.5 588.3 1136.7 577.0 1136.8 570.2 1136.9 570.2 1137.1 586.0 1137.2 586.0 1137.3 586.0 1137.5 572.5 1137.6 597.3 1137.7 563.4 1137.9 581.5 1138.0 586.0 1138.1 572.5 1138.3 565.7 1138.4 572.5 1138.5 565.7 1138.7 574.7 1138.8 563.4 1138.9 563.4 1139.1 577.0 1139.2 563.4 1139.3 574.7 1139.5 577.0 1139.6 586.0 1139.7 579.2 1139.9 570.2 1140.0 590.6 1140.1 570.2 1140.3 572.5 1140.4 574.7 1140.5 599.6 1140.7 577.0 1140.8 570.2 1140.9 583.8 1141.1 577.0 1141.2 601.9 1141.3 570.2 1141.4 583.8 1141.6 567.9 1141.7 595.1 1141.8 570.2 1142.0 579.2 1142.1 567.9 1142.2 586.0 1142.4 583.8 1142.5 554.4 1142.6 586.0 1142.8 583.8 1142.9 579.2 1143.0 588.3 1143.2 565.7 1143.3 558.9 1143.4 583.8 1143.6 595.1 1143.7 565.7 1143.8 565.7 1144.0 567.9 1144.1 565.7 1144.2 586.0 1144.4 579.2 1144.5 590.6 1144.6 590.6 1144.8 567.9 1144.9 583.8 1145.0 554.4 1145.2 577.0 1145.3 583.8 1145.4 567.9 1145.6 558.9 1145.7 572.5 1145.8 588.3 1146.0 572.5 1146.1 563.4 1146.2 581.5 1146.4 583.8 1146.5 565.7 1146.6 574.7 1146.8 588.3 1146.9 581.5 1147.0 583.8 1147.2 574.7 1147.3 577.0 1147.4 565.7 1147.5 570.2 1147.7 592.8 1147.8 572.5 1147.9 567.9 1148.1 572.5 1148.2 565.7 1148.3 581.5 1148.5 586.0 1148.6 567.9 1148.7 588.3 1148.9 599.6 1149.0 565.7 1149.1 583.8 1149.3 579.2 1149.4 590.6 1149.5 590.6 1149.7 588.3 1149.8 581.5 1149.9 572.5 1150.1 599.6 1150.2 570.2 1150.3 588.3 1150.5 588.3 1150.6 570.2 1150.7 577.0 1150.9 592.8 1151.0 558.9 1151.1 586.0 1151.3 574.7 1151.4 574.7 1151.5 563.4 1151.7 581.5 1151.8 565.7 1151.9 583.8 1152.1 565.7 1152.2 583.8 1152.3 581.5 1152.5 556.6 1152.6 574.7 1152.7 577.0 1152.9 554.4 1153.0 572.5 1153.1 586.0 1153.3 570.2 1153.4 588.3 1153.5 565.7 1153.6 565.7 1153.8 583.8 1153.9 583.8 1154.0 574.7 1154.2 577.0 1154.3 586.0 1154.4 570.2 1154.6 597.3 1154.7 581.5 1154.8 581.5 1155.0 579.2 1155.1 574.7 1155.2 590.6 1155.4 570.2 1155.5 579.2 1155.6 583.8 1155.8 590.6 1155.9 588.3 1156.0 572.5 1156.2 586.0 1156.3 577.0 1156.4 565.7 1156.6 565.7 1156.7 561.1 1156.8 579.2 1157.0 588.3 1157.1 565.7 1157.2 574.7 1157.4 565.7 1157.5 577.0 1157.6 565.7 1157.8 567.9 1157.9 570.2 1158.0 572.5 1158.2 572.5 1158.3 574.7 1158.4 574.7 1158.6 567.9 1158.7 581.5 1158.8 558.9 1159.0 577.0 1159.1 567.9 1159.2 577.0 1159.4 579.2 1159.5 556.6 1159.6 579.2 1159.7 590.6 1159.9 583.8 1160.0 579.2 1160.1 554.4 1160.3 574.7 1160.4 567.9 1160.5 588.3 1160.7 572.5 1160.8 570.2 1160.9 558.9 1161.1 583.8 1161.2 570.2 1161.3 574.7 1161.5 588.3 1161.6 577.0 1161.7 579.2 1161.9 599.6 1162.0 570.2 1162.1 572.5 1162.3 581.5 1162.4 590.6 1162.5 561.1 1162.7 574.7 1162.8 565.7 1162.9 563.4 1163.1 581.5 1163.2 567.9 1163.3 579.2 1163.5 577.0 1163.6 577.0 1163.7 577.0 1163.9 565.7 1164.0 574.7 1164.1 579.2 1164.3 579.2 1164.4 572.5 1164.5 586.0 1164.7 581.5 1164.8 577.0 1164.9 583.8 1165.1 579.2 1165.2 583.8 1165.3 556.6 1165.5 563.4 1165.6 572.5 1165.7 577.0 1165.8 554.4 1166.0 574.7 1166.1 577.0 1166.2 574.7 1166.4 574.7 1166.5 563.4 1166.6 577.0 1166.8 556.6 1166.9 586.0 1167.0 570.2 1167.2 588.3 1167.3 558.9 1167.4 579.2 1167.6 577.0 1167.7 567.9 1167.8 563.4 1168.0 588.3 1168.1 581.5 1168.2 590.6 1168.4 574.7 1168.5 577.0 1168.6 581.5 1168.8 583.8 1168.9 581.5 1169.0 583.8 1169.2 572.5 1169.3 561.1 1169.4 597.3 1169.6 579.2 1169.7 581.5 1169.8 572.5 1170.0 586.0 1170.1 579.2 1170.2 588.3 1170.4 570.2 1170.5 577.0 1170.6 579.2 1170.8 572.5 1170.9 579.2 1171.0 592.8 1171.2 570.2 1171.3 574.7 1171.4 579.2 1171.6 567.9 1171.7 565.7 1171.8 588.3 1171.9 586.0 1172.1 561.1 1172.2 563.4 1172.3 583.8 1172.5 588.3 1172.6 583.8 1172.7 581.5 1172.9 592.8 1173.0 577.0 1173.1 590.6 1173.3 588.3 1173.4 567.9 1173.5 583.8 1173.7 577.0 1173.8 570.2 1173.9 567.9 1174.1 581.5 1174.2 577.0 1174.3 586.0 1174.5 558.9 1174.6 570.2 1174.7 588.3 1174.9 577.0 1175.0 570.2 1175.1 572.5 1175.3 558.9 1175.4 563.4 1175.5 581.5 1175.7 577.0 1175.8 590.6 1175.9 574.7 1176.1 574.7 1176.2 549.8 1176.3 577.0 1176.5 597.3 1176.6 583.8 1176.7 574.7 1176.9 590.6 1177.0 586.0 1177.1 581.5 1177.3 572.5 1177.4 579.2 1177.5 586.0 1177.7 567.9 1177.8 581.5 1177.9 581.5 1178.0 590.6 1178.2 586.0 1178.3 570.2 1178.4 592.8 1178.6 577.0 1178.7 570.2 1178.8 581.5 1179.0 574.7 1179.1 588.3 1179.2 563.4 1179.4 565.7 1179.5 574.7 1179.6 595.1 1179.8 588.3 1179.9 567.9 1180.0 558.9 1180.2 574.7 1180.3 563.4 1180.4 583.8 1180.6 579.2 1180.7 577.0 1180.8 572.5 1181.0 592.8 1181.1 567.9 1181.2 563.4 1181.4 588.3 1181.5 590.6 1181.6 572.5 1181.8 583.8 1181.9 601.9 1182.0 567.9 1182.2 574.7 1182.3 581.5 1182.4 554.4 1182.6 574.7 1182.7 583.8 1182.8 577.0 1183.0 588.3 1183.1 583.8 1183.2 572.5 1183.4 581.5" fill="none" stroke="#0000ff" stroke-width="1.7" stroke-linejoin="round" clip-path="url(#c3)"/><rect x="911.0" y="516.9" width="274.0" height="120.10000000000002" fill="none" stroke="#000" stroke-width="1.55"/><path d="M911.90 637.00v7.0M978.20 637.00v7.0M1044.51 637.00v7.0M1110.82 637.00v7.0M1177.12 637.00v7.0" stroke="#000" stroke-width="1.5"/><text x="908.94" y="659.60" font-size="10.70" textLength="5.92" lengthAdjust="spacingAndGlyphs" fill="#000" >0</text><text x="968.84" y="659.60" font-size="10.70" textLength="18.72" lengthAdjust="spacingAndGlyphs" fill="#000" >500</text><text x="1031.68" y="659.60" font-size="10.70" textLength="25.23" lengthAdjust="spacingAndGlyphs" fill="#000" >1000</text><text x="1097.99" y="659.60" font-size="10.70" textLength="25.23" lengthAdjust="spacingAndGlyphs" fill="#000" >1500</text><text x="1164.40" y="659.60" font-size="10.70" textLength="25.31" lengthAdjust="spacingAndGlyphs" fill="#000" >2000</text><path d="M911.00 617.70h-7.0M911.00 572.45h-7.0M911.00 527.20h-7.0" stroke="#000" stroke-width="1.5"/><text x="877.66" y="621.55" font-size="10.70" textLength="18.88" lengthAdjust="spacingAndGlyphs" fill="#000" >200</text><text x="877.66" y="576.30" font-size="10.70" textLength="18.88" lengthAdjust="spacingAndGlyphs" fill="#000" >220</text><text x="877.66" y="531.05" font-size="10.70" textLength="18.88" lengthAdjust="spacingAndGlyphs" fill="#000" >240</text><text x="1044.52" y="678.00" font-size="11.02" textLength="6.94" lengthAdjust="spacingAndGlyphs" fill="#000" >X</text><g transform="translate(865.50,578.10) rotate(-90)"><text x="-17.34" y="0.00" font-size="11.02" textLength="34.60" lengthAdjust="spacingAndGlyphs">counts</text></g><g transform="translate(1194.30,575.55) rotate(90)"><text x="-19.37" y="0.00" font-size="11.02" textLength="38.36" lengthAdjust="spacingAndGlyphs">cut in x</text></g><rect x="1116.0" y="520.0" width="66.1" height="15.8" rx="2.2" fill="#fff" fill-opacity="0.8" stroke="#d6d6d6" stroke-width="1.3"/><path d="M1118.1 527.9H1139.8" stroke="#0000ff" stroke-width="1.8"/><text x="1144.17" y="530.60" font-size="10.70" textLength="33.19" lengthAdjust="spacingAndGlyphs" fill="#000" >y=517</text><clipPath id="c4"><rect x="911.0" y="689.05" width="274.0" height="119.65000000000009"/></clipPath><path d="M913.5 902.3 913.8 778.5 914.0 740.3 914.3 740.3 914.5 744.8 914.8 744.8 915.1 733.5 915.3 749.3 915.6 731.3 915.8 758.3 916.1 751.5 916.4 762.8 916.6 753.8 916.9 744.8 917.1 733.5 917.4 756.0 917.6 749.3 917.9 753.8 918.2 756.0 918.4 760.5 918.7 749.3 918.9 767.3 919.2 749.3 919.5 749.3 919.7 756.0 920.0 760.5 920.2 762.8 920.5 731.3 920.8 762.8 921.0 733.5 921.3 742.5 921.5 753.8 921.8 760.5 922.1 738.0 922.3 731.3 922.6 758.3 922.8 751.5 923.1 738.0 923.3 744.8 923.6 729.0 923.9 756.0 924.1 744.8 924.4 762.8 924.6 729.0 924.9 756.0 925.2 771.8 925.4 751.5 925.7 751.5 925.9 729.0 926.2 753.8 926.5 749.3 926.7 742.5 927.0 733.5 927.2 749.3 927.5 738.0 927.8 744.8 928.0 751.5 928.3 749.3 928.5 749.3 928.8 758.3 929.1 738.0 929.3 762.8 929.6 738.0 929.8 740.3 930.1 749.3 930.3 756.0 930.6 751.5 930.9 744.8 931.1 742.5 931.4 747.0 931.6 740.3 931.9 756.0 932.2 747.0 932.4 765.0 932.7 742.5 932.9 747.0 933.2 753.8 933.5 738.0 933.7 742.5 934.0 778.5 934.2 749.3 934.5 765.0 934.8 738.0 935.0 724.5 935.3 753.8 935.5 749.3 935.8 751.5 936.0 744.8 936.3 742.5 936.6 735.8 936.8 758.3 937.1 733.5 937.3 758.3 937.6 747.0 937.9 738.0 938.1 742.5 938.4 758.3 938.6 756.0 938.9 753.8 939.2 749.3 939.4 738.0 939.7 762.8 939.9 744.8 940.2 742.5 940.5 742.5 940.7 744.8 941.0 733.5 941.2 744.8 941.5 740.3 941.8 742.5 942.0 731.3 942.3 769.5 942.5 735.8 942.8 751.5 943.0 751.5 943.3 758.3 943.6 767.3 943.8 753.8 944.1 756.0 944.3 744.8 944.6 765.0 944.9 735.8 945.1 747.0 945.4 751.5 945.6 756.0 945.9 758.3 946.2 760.5 946.4 753.8 946.7 749.3 946.9 751.5 947.2 762.8 947.5 751.5 947.7 758.3 948.0 747.0 948.2 731.3 948.5 742.5 948.7 751.5 949.0 765.0 949.3 762.8 949.5 767.3 949.8 742.5 950.0 756.0 950.3 749.3 950.6 756.0 950.8 749.3 951.1 735.8 951.3 756.0 951.6 753.8 951.9 758.3 952.1 740.3 952.4 760.5 952.6 760.5 952.9 762.8 953.2 762.8 953.4 744.8 953.7 722.3 953.9 758.3 954.2 740.3 954.5 747.0 954.7 760.5 955.0 751.5 955.2 751.5 955.5 756.0 955.7 729.0 956.0 769.5 956.3 744.8 956.5 747.0 956.8 756.0 957.0 747.0 957.3 740.3 957.6 747.0 957.8 744.8 958.1 742.5 958.3 769.5 958.6 733.5 958.9 726.8 959.1 740.3 959.4 738.0 959.6 762.8 959.9 751.5 960.2 758.3 960.4 756.0 960.7 740.3 960.9 758.3 961.2 751.5 961.4 769.5 961.7 751.5 962.0 749.3 962.2 756.0 962.5 756.0 962.7 731.3 963.0 760.5 963.3 760.5 963.5 758.3 963.8 738.0 964.0 729.0 964.3 747.0 964.6 756.0 964.8 753.8 965.1 738.0 965.3 758.3 965.6 733.5 965.9 735.8 966.1 749.3 966.4 742.5 966.6 742.5 966.9 733.5 967.2 760.5 967.4 738.0 967.7 753.8 967.9 756.0 968.2 749.3 968.4 751.5 968.7 758.3 969.0 765.0 969.2 758.3 969.5 733.5 969.7 729.0 970.0 742.5 970.3 738.0 970.5 753.8 970.8 749.3 971.0 747.0 971.3 760.5 971.6 758.3 971.8 749.3 972.1 751.5 972.3 760.5 972.6 744.8 972.9 751.5 973.1 738.0 973.4 749.3 973.6 751.5 973.9 747.0 974.1 751.5 974.4 756.0 974.7 753.8 974.9 742.5 975.2 742.5 975.4 735.8 975.7 767.3 976.0 753.8 976.2 753.8 976.5 747.0 976.7 753.8 977.0 753.8 977.3 740.3 977.5 747.0 977.8 760.5 978.0 735.8 978.3 740.3 978.6 756.0 978.8 740.3 979.1 756.0 979.3 738.0 979.6 751.5 979.9 758.3 980.1 753.8 980.4 756.0 980.6 747.0 980.9 747.0 981.1 749.3 981.4 756.0 981.7 785.3 981.9 749.3 982.2 769.5 982.4 747.0 982.7 738.0 983.0 747.0 983.2 753.8 983.5 751.5 983.7 751.5 984.0 753.8 984.3 756.0 984.5 758.3 984.8 738.0 985.0 749.3 985.3 740.3 985.6 751.5 985.8 749.3 986.1 751.5 986.3 744.8 986.6 740.3 986.8 747.0 987.1 756.0 987.4 758.3 987.6 733.5 987.9 751.5 988.1 751.5 988.4 733.5 988.7 738.0 988.9 744.8 989.2 753.8 989.4 724.5 989.7 744.8 990.0 744.8 990.2 751.5 990.5 762.8 990.7 762.8 991.0 744.8 991.3 744.8 991.5 751.5 991.8 760.5 992.0 762.8 992.3 751.5 992.5 765.0 992.8 740.3 993.1 738.0 993.3 720.0 993.6 740.3 993.8 756.0 994.1 758.3 994.4 785.3 994.6 756.0 994.9 751.5 995.1 740.3 995.4 742.5 995.7 742.5 995.9 747.0 996.2 742.5 996.4 733.5 996.7 760.5 997.0 753.8 997.2 762.8 997.5 733.5 997.7 735.8 998.0 742.5 998.3 760.5 998.5 747.0 998.8 751.5 999.0 749.3 999.3 751.5 999.5 744.8 999.8 753.8 1000.1 740.3 1000.3 747.0 1000.6 751.5 1000.8 751.5 1001.1 753.8 1001.4 740.3 1001.6 751.5 1001.9 747.0 1002.1 753.8 1002.4 765.0 1002.7 740.3 1002.9 760.5 1003.2 742.5 1003.4 744.8 1003.7 765.0 1004.0 758.3 1004.2 753.8 1004.5 758.3 1004.7 760.5 1005.0 742.5 1005.2 751.5 1005.5 744.8 1005.8 753.8 1006.0 747.0 1006.3 756.0 1006.5 749.3 1006.8 742.5 1007.1 749.3 1007.3 753.8 1007.6 760.5 1007.8 747.0 1008.1 744.8 1008.4 751.5 1008.6 756.0 1008.9 744.8 1009.1 724.5 1009.4 751.5 1009.7 744.8 1009.9 744.8 1010.2 776.3 1010.4 747.0 1010.7 756.0 1011.0 735.8 1011.2 751.5 1011.5 756.0 1011.7 751.5 1012.0 747.0 1012.2 756.0 1012.5 749.3 1012.8 762.8 1013.0 751.5 1013.3 742.5 1013.5 729.0 1013.8 742.5 1014.1 747.0 1014.3 738.0 1014.6 738.0 1014.8 733.5 1015.1 738.0 1015.4 751.5 1015.6 747.0 1015.9 747.0 1016.1 747.0 1016.4 747.0 1016.7 758.3 1016.9 769.5 1017.2 756.0 1017.4 769.5 1017.7 749.3 1017.9 749.3 1018.2 767.3 1018.5 742.5 1018.7 740.3 1019.0 749.3 1019.2 731.3 1019.5 731.3 1019.8 760.5 1020.0 738.0 1020.3 744.8 1020.5 744.8 1020.8 740.3 1021.1 756.0 1021.3 756.0 1021.6 758.3 1021.8 756.0 1022.1 749.3 1022.4 765.0 1022.6 760.5 1022.9 742.5 1023.1 749.3 1023.4 744.8 1023.7 769.5 1023.9 758.3 1024.2 753.8 1024.4 749.3 1024.7 756.0 1024.9 740.3 1025.2 749.3 1025.5 749.3 1025.7 749.3 1026.0 742.5 1026.2 753.8 1026.5 738.0 1026.8 744.8 1027.0 747.0 1027.3 749.3 1027.5 744.8 1027.8 738.0 1028.1 740.3 1028.3 744.8 1028.6 740.3 1028.8 747.0 1029.1 735.8 1029.4 749.3 1029.6 769.5 1029.9 735.8 1030.1 749.3 1030.4 760.5 1030.6 751.5 1030.9 758.3 1031.2 729.0 1031.4 744.8 1031.7 765.0 1031.9 744.8 1032.2 753.8 1032.5 729.0 1032.7 760.5 1033.0 771.8 1033.2 749.3 1033.5 753.8 1033.8 753.8 1034.0 771.8 1034.3 744.8 1034.5 731.3 1034.8 769.5 1035.1 738.0 1035.3 756.0 1035.6 724.5 1035.8 744.8 1036.1 751.5 1036.4 738.0 1036.6 744.8 1036.9 756.0 1037.1 742.5 1037.4 753.8 1037.6 767.3 1037.9 729.0 1038.2 753.8 1038.4 756.0 1038.7 744.8 1038.9 765.0 1039.2 762.8 1039.5 753.8 1039.7 753.8 1040.0 749.3 1040.2 738.0 1040.5 753.8 1040.8 744.8 1041.0 742.5 1041.3 760.5 1041.5 747.0 1041.8 758.3 1042.1 738.0 1042.3 744.8 1042.6 749.3 1042.8 762.8 1043.1 747.0 1043.3 756.0 1043.6 742.5 1043.9 751.5 1044.1 758.3 1044.4 740.3 1044.6 742.5 1044.9 756.0 1045.2 738.0 1045.4 751.5 1045.7 751.5 1045.9 747.0 1046.2 756.0 1046.5 753.8 1046.7 751.5 1047.0 733.5 1047.2 733.5 1047.5 751.5 1047.8 733.5 1048.0 749.3 1048.3 744.8 1048.5 740.3 1048.8 747.0 1049.1 724.5 1049.3 747.0 1049.6 760.5 1049.8 735.8 1050.1 753.8 1050.3 751.5 1050.6 778.5 1050.9 738.0 1051.1 740.3 1051.4 740.3 1051.6 740.3 1051.9 731.3 1052.2 749.3 1052.4 740.3 1052.7 756.0 1052.9 753.8 1053.2 738.0 1053.5 744.8 1053.7 762.8 1054.0 744.8 1054.2 751.5 1054.5 758.3 1054.8 744.8 1055.0 753.8 1055.3 765.0 1055.5 760.5 1055.8 731.3 1056.0 765.0 1056.3 747.0 1056.6 742.5 1056.8 742.5 1057.1 762.8 1057.3 751.5 1057.6 747.0 1057.9 740.3 1058.1 756.0 1058.4 760.5 1058.6 738.0 1058.9 738.0 1059.2 744.8 1059.4 756.0 1059.7 744.8 1059.9 749.3 1060.2 740.3 1060.5 762.8 1060.7 747.0 1061.0 751.5 1061.2 760.5 1061.5 747.0 1061.8 749.3 1062.0 753.8 1062.3 744.8 1062.5 762.8 1062.8 749.3 1063.0 744.8 1063.3 747.0 1063.6 738.0 1063.8 760.5 1064.1 765.0 1064.3 747.0 1064.6 744.8 1064.9 726.8 1065.1 742.5 1065.4 758.3 1065.6 740.3 1065.9 758.3 1066.2 765.0 1066.4 722.3 1066.7 747.0 1066.9 742.5 1067.2 742.5 1067.5 731.3 1067.7 747.0 1068.0 738.0 1068.2 760.5 1068.5 762.8 1068.7 735.8 1069.0 733.5 1069.3 744.8 1069.5 747.0 1069.8 747.0 1070.0 756.0 1070.3 733.5 1070.6 742.5 1070.8 744.8 1071.1 744.8 1071.3 738.0 1071.6 744.8 1071.9 742.5 1072.1 760.5 1072.4 744.8 1072.6 726.8 1072.9 753.8 1073.2 751.5 1073.4 740.3 1073.7 740.3 1073.9 742.5 1074.2 765.0 1074.5 744.8 1074.7 760.5 1075.0 758.3 1075.2 744.8 1075.5 751.5 1075.7 740.3 1076.0 717.8 1076.3 742.5 1076.5 742.5 1076.8 758.3 1077.0 756.0 1077.3 760.5 1077.6 753.8 1077.8 760.5 1078.1 756.0 1078.3 751.5 1078.6 760.5 1078.9 762.8 1079.1 762.8 1079.4 744.8 1079.6 749.3 1079.9 738.0 1080.2 738.0 1080.4 753.8 1080.7 742.5 1080.9 762.8 1081.2 726.8 1081.4 738.0 1081.7 751.5 1082.0 760.5 1082.2 744.8 1082.5 767.3 1082.7 758.3 1083.0 742.5 1083.3 749.3 1083.5 753.8 1083.8 740.3 1084.0 760.5 1084.3 747.0 1084.6 753.8 1084.8 758.3 1085.1 744.8 1085.3 758.3 1085.6 729.0 1085.9 756.0 1086.1 729.0 1086.4 760.5 1086.6 742.5 1086.9 760.5 1087.2 762.8 1087.4 747.0 1087.7 742.5 1087.9 762.8 1088.2 738.0 1088.4 758.3 1088.7 747.0 1089.0 744.8 1089.2 742.5 1089.5 767.3 1089.7 733.5 1090.0 742.5 1090.3 753.8 1090.5 760.5 1090.8 767.3 1091.0 762.8 1091.3 744.8 1091.6 753.8 1091.8 760.5 1092.1 753.8 1092.3 733.5 1092.6 751.5 1092.9 756.0 1093.1 735.8 1093.4 744.8 1093.6 749.3 1093.9 756.0 1094.1 765.0 1094.4 760.5 1094.7 753.8 1094.9 751.5 1095.2 744.8 1095.4 744.8 1095.7 747.0 1096.0 747.0 1096.2 760.5 1096.5 771.8 1096.7 753.8 1097.0 758.3 1097.3 756.0 1097.5 751.5 1097.8 762.8 1098.0 760.5 1098.3 749.3 1098.6 747.0 1098.8 756.0 1099.1 744.8 1099.3 751.5 1099.6 760.5 1099.9 749.3 1100.1 731.3 1100.4 756.0 1100.6 738.0 1100.9 735.8 1101.1 733.5 1101.4 758.3 1101.7 729.0 1101.9 747.0 1102.2 751.5 1102.4 751.5 1102.7 742.5 1103.0 749.3 1103.2 751.5 1103.5 735.8 1103.7 756.0 1104.0 760.5 1104.3 740.3 1104.5 742.5 1104.8 738.0 1105.0 760.5 1105.3 738.0 1105.6 744.8 1105.8 731.3 1106.1 762.8 1106.3 747.0 1106.6 751.5 1106.8 765.0 1107.1 756.0 1107.4 738.0 1107.6 753.8 1107.9 756.0 1108.1 740.3 1108.4 740.3 1108.7 740.3 1108.9 758.3 1109.2 749.3 1109.4 738.0 1109.7 756.0 1110.0 756.0 1110.2 740.3 1110.5 733.5 1110.7 760.5 1111.0 776.3 1111.3 765.0 1111.5 760.5 1111.8 751.5 1112.0 742.5 1112.3 751.5 1112.6 756.0 1112.8 747.0 1113.1 758.3 1113.3 749.3 1113.6 756.0 1113.8 722.3 1114.1 740.3 1114.4 758.3 1114.6 758.3 1114.9 753.8 1115.1 765.0 1115.4 756.0 1115.7 756.0 1115.9 740.3 1116.2 753.8 1116.4 758.3 1116.7 762.8 1117.0 760.5 1117.2 749.3 1117.5 751.5 1117.7 738.0 1118.0 756.0 1118.3 738.0 1118.5 747.0 1118.8 749.3 1119.0 769.5 1119.3 762.8 1119.5 742.5 1119.8 735.8 1120.1 747.0 1120.3 742.5 1120.6 753.8 1120.8 753.8 1121.1 756.0 1121.4 740.3 1121.6 744.8 1121.9 751.5 1122.1 751.5 1122.4 742.5 1122.7 747.0 1122.9 758.3 1123.2 731.3 1123.4 747.0 1123.7 749.3 1124.0 733.5 1124.2 738.0 1124.5 749.3 1124.7 744.8 1125.0 760.5 1125.3 756.0 1125.5 771.8 1125.8 738.0 1126.0 769.5 1126.3 742.5 1126.5 758.3 1126.8 758.3 1127.1 751.5 1127.3 747.0 1127.6 742.5 1127.8 731.3 1128.1 744.8 1128.4 740.3 1128.6 756.0 1128.9 742.5 1129.1 747.0 1129.4 753.8 1129.7 749.3 1129.9 749.3 1130.2 747.0 1130.4 744.8 1130.7 753.8 1131.0 756.0 1131.2 742.5 1131.5 767.3 1131.7 756.0 1132.0 733.5 1132.2 776.3 1132.5 756.0 1132.8 742.5 1133.0 765.0 1133.3 722.3 1133.5 776.3 1133.8 735.8 1134.1 733.5 1134.3 740.3 1134.6 751.5 1134.8 744.8 1135.1 758.3 1135.4 740.3 1135.6 760.5 1135.9 751.5 1136.1 740.3 1136.4 760.5 1136.7 753.8 1136.9 747.0 1137.2 762.8 1137.4 738.0 1137.7 744.8 1137.9 765.0 1138.2 749.3 1138.5 756.0 1138.7 756.0 1139.0 749.3 1139.2 756.0 1139.5 740.3 1139.8 756.0 1140.0 740.3 1140.3 749.3 1140.5 740.3 1140.8 753.8 1141.1 753.8 1141.3 760.5 1141.6 742.5 1141.8 740.3 1142.1 726.8 1142.4 735.8 1142.6 747.0 1142.9 751.5 1143.1 744.8 1143.4 749.3 1143.7 733.5 1143.9 740.3 1144.2 758.3 1144.4 756.0 1144.7 735.8 1144.9 747.0 1145.2 751.5 1145.5 738.0 1145.7 753.8 1146.0 751.5 1146.2 753.8 1146.5 769.5 1146.8 740.3 1147.0 760.5 1147.3 756.0 1147.5 756.0 1147.8 742.5 1148.1 749.3 1148.3 749.3 1148.6 767.3 1148.8 749.3 1149.1 765.0 1149.4 747.0 1149.6 744.8 1149.9 749.3 1150.1 729.0 1150.4 744.8 1150.6 742.5 1150.9 747.0 1151.2 751.5 1151.4 740.3 1151.7 738.0 1151.9 762.8 1152.2 738.0 1152.5 744.8 1152.7 740.3 1153.0 744.8 1153.2 762.8 1153.5 760.5 1153.8 731.3 1154.0 747.0 1154.3 762.8 1154.5 744.8 1154.8 753.8 1155.1 767.3 1155.3 771.8 1155.6 765.0 1155.8 747.0 1156.1 749.3 1156.4 751.5 1156.6 747.0 1156.9 742.5 1157.1 769.5 1157.4 751.5 1157.6 758.3 1157.9 762.8 1158.2 753.8 1158.4 751.5 1158.7 751.5 1158.9 765.0 1159.2 753.8 1159.5 729.0 1159.7 760.5 1160.0 767.3 1160.2 747.0 1160.5 742.5 1160.8 744.8 1161.0 760.5 1161.3 740.3 1161.5 758.3 1161.8 760.5 1162.1 756.0 1162.3 749.3 1162.6 742.5 1162.8 742.5 1163.1 749.3 1163.3 740.3 1163.6 749.3 1163.9 740.3 1164.1 762.8 1164.4 765.0 1164.6 742.5 1164.9 762.8 1165.2 751.5 1165.4 749.3 1165.7 753.8 1165.9 753.8 1166.2 735.8 1166.5 774.0 1166.7 740.3 1167.0 726.8 1167.2 749.3 1167.5 749.3 1167.8 742.5 1168.0 731.3 1168.3 760.5 1168.5 749.3 1168.8 751.5 1169.1 742.5 1169.3 747.0 1169.6 742.5 1169.8 753.8 1170.1 749.3 1170.3 756.0 1170.6 756.0 1170.9 751.5 1171.1 751.5 1171.4 760.5 1171.6 733.5 1171.9 751.5 1172.2 762.8 1172.4 738.0 1172.7 756.0 1172.9 744.8 1173.2 749.3 1173.5 747.0 1173.7 747.0 1174.0 756.0 1174.2 749.3 1174.5 729.0 1174.8 771.8 1175.0 749.3 1175.3 744.8 1175.5 760.5 1175.8 762.8 1176.0 726.8 1176.3 753.8 1176.6 729.0 1176.8 744.8 1177.1 749.3 1177.3 744.8 1177.6 742.5 1177.9 738.0 1178.1 744.8 1178.4 747.0 1178.6 747.0 1178.9 735.8 1179.2 740.3 1179.4 760.5 1179.7 756.0 1179.9 747.0 1180.2 756.0 1180.5 753.8 1180.7 758.3 1181.0 751.5 1181.2 744.8" fill="none" stroke="#0000ff" stroke-width="1.7" stroke-linejoin="round" clip-path="url(#c4)"/><rect x="911.0" y="689.05" width="274.0" height="119.65000000000009" fill="none" stroke="#000" stroke-width="1.55"/><path d="M913.50 808.70v7.0M965.34 808.70v7.0M1017.17 808.70v7.0M1069.01 808.70v7.0M1120.84 808.70v7.0M1172.68 808.70v7.0" stroke="#000" stroke-width="1.5"/><text x="910.54" y="831.90" font-size="10.70" textLength="5.92" lengthAdjust="spacingAndGlyphs" fill="#000" >0</text><text x="955.83" y="831.90" font-size="10.70" textLength="18.88" lengthAdjust="spacingAndGlyphs" fill="#000" >200</text><text x="1007.86" y="831.90" font-size="10.70" textLength="18.81" lengthAdjust="spacingAndGlyphs" fill="#000" >400</text><text x="1059.48" y="831.90" font-size="10.70" textLength="18.92" lengthAdjust="spacingAndGlyphs" fill="#000" >600</text><text x="1111.39" y="831.90" font-size="10.70" textLength="18.85" lengthAdjust="spacingAndGlyphs" fill="#000" >800</text><text x="1159.85" y="831.90" font-size="10.70" textLength="25.23" lengthAdjust="spacingAndGlyphs" fill="#000" >1000</text><path d="M911.00 789.80h-7.0M911.00 744.80h-7.0M911.00 699.80h-7.0" stroke="#000" stroke-width="1.5"/><text x="877.66" y="793.65" font-size="10.70" textLength="18.88" lengthAdjust="spacingAndGlyphs" fill="#000" >200</text><text x="877.66" y="748.65" font-size="10.70" textLength="18.88" lengthAdjust="spacingAndGlyphs" fill="#000" >220</text><text x="877.66" y="703.65" font-size="10.70" textLength="18.88" lengthAdjust="spacingAndGlyphs" fill="#000" >240</text><text x="1045.58" y="849.60" font-size="11.02" textLength="6.84" lengthAdjust="spacingAndGlyphs" fill="#000" >Y</text><g transform="translate(865.50,751.20) rotate(-90)"><text x="-17.34" y="0.00" font-size="11.02" textLength="34.60" lengthAdjust="spacingAndGlyphs">counts</text></g><g transform="translate(1194.30,749.40) rotate(90)"><text x="-19.39" y="0.00" font-size="11.02" textLength="38.29" lengthAdjust="spacingAndGlyphs">cut in y</text></g><rect x="1109.2" y="692.0" width="72.9" height="15.8" rx="2.2" fill="#fff" fill-opacity="0.8" stroke="#d6d6d6" stroke-width="1.3"/><path d="M1111.2 699.9H1133.8" stroke="#0000ff" stroke-width="1.8"/><text x="1137.16" y="702.80" font-size="10.70" textLength="39.77" lengthAdjust="spacingAndGlyphs" fill="#000" >x=1024</text></svg>
<script>
(function(){
var c=document.getElementById('noise');var ctx=c.getContext('2d');
var w=570,h=288;var im=ctx.createImageData(w,h);var d=im.data;
var s=123456789;function rnd(){s^=s<<13;s^=s>>>17;s^=s<<5;return ((s>>>0)%1000000)/1000000;}
function gauss(){var u=rnd()||1e-6,v=rnd();return Math.sqrt(-2*Math.log(u))*Math.cos(6.283185*v);}
for(var i=0;i<w*h;i++){var v=Math.round(218.2+4.2*gauss());var t=(v-213.596)/8.807;if(t<0)t=0;if(t>1)t=1;
var r=t<0.365079?0.0416+(1-0.0416)*t/0.365079:1;var g=t<0.365079?0:(t<0.746032?(t-0.365079)/(0.746032-0.365079):1);var b=t<0.746032?0:(t-0.746032)/(1-0.746032);
d[i*4]=r*255;d[i*4+1]=g*255;d[i*4+2]=b*255;d[i*4+3]=255;}
ctx.putImageData(im,0,0);
})();
</script>
</body></html>
